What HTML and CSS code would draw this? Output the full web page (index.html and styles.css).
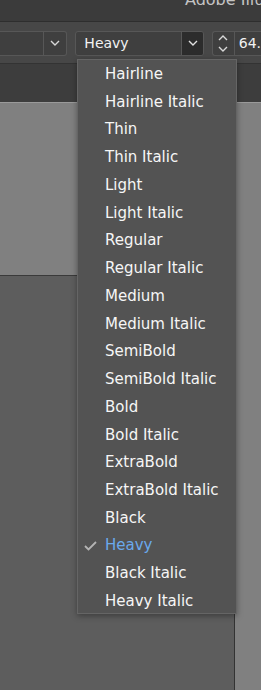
FILE: index.html
```html
<html>
<head>
    <link rel="stylesheet" href="styles.css">
</head>
<body>
    <div class="app">
        <div class="titlebar"><span class="title">Adobe Illustrator</span></div>
        <div class="controlbar">
            <div class="field field-left">
                <span class="field-text"></span>
                <span class="field-arrow">
                    <svg width="10" height="6" viewBox="0 0 10 6"><polyline points="1,1 5,5 9,1" fill="none" stroke="#d8d8d8" stroke-width="1.4"/></svg>
                </span>
            </div>
            <div class="field field-style">
                <span class="field-text">Heavy</span>
                <span class="field-arrow active">
                    <svg width="10" height="6" viewBox="0 0 10 6"><polyline points="1,1 5,5 9,1" fill="none" stroke="#e0e0e0" stroke-width="1.4"/></svg>
                </span>
            </div>
            <div class="stepper">
                <svg width="10" height="6" viewBox="0 0 10 6"><polyline points="1,5 5,1 9,5" fill="none" stroke="#d8d8d8" stroke-width="1.4"/></svg>
                <svg width="10" height="6" viewBox="0 0 10 6"><polyline points="1,1 5,5 9,1" fill="none" stroke="#d8d8d8" stroke-width="1.4"/></svg>
            </div>
            <div class="field field-size"><span class="field-text">64.</span></div>
        </div>
        <div class="tabbar"></div>
        <div class="workspace">
            <div class="document"></div>
        </div>

        <ul class="style-menu">
            <li>Hairline</li>
            <li>Hairline Italic</li>
            <li>Thin</li>
            <li>Thin Italic</li>
            <li>Light</li>
            <li>Light Italic</li>
            <li>Regular</li>
            <li>Regular Italic</li>
            <li>Medium</li>
            <li>Medium Italic</li>
            <li>SemiBold</li>
            <li>SemiBold Italic</li>
            <li>Bold</li>
            <li>Bold Italic</li>
            <li>ExtraBold</li>
            <li>ExtraBold Italic</li>
            <li>Black</li>
            <li class="selected">
                <svg class="check" width="13" height="10" viewBox="0 0 13 10"><polyline points="1,5 4.5,8.5 12,1" fill="none" stroke="#b4b4b4" stroke-width="1.8"/></svg>
                Heavy
            </li>
            <li>Black Italic</li>
            <li>Heavy Italic</li>
        </ul>
    </div>
</body>
</html>
```

FILE: styles.css
```css
body {
    margin: 0;
    padding: 0;
    font-family: "DejaVu Sans", "Open Sans", sans-serif;
    background-color: #808080;
}
.app {
    position: relative;
    width: 261px;
    height: 690px;
    overflow: hidden;
    display: flex;
    flex-direction: column;
}
.titlebar {
    height: 21px;
    background-color: #3b3b3b;
    border-bottom: 1px solid #2e2e2e;
    overflow: hidden;
}
.title {
    display: block;
    margin-top: -10px;
    padding-left: 185px;
    font-size: 16px;
    line-height: 20px;
    color: #c4c4c4;
    white-space: nowrap;
}
.controlbar {
    height: 42px;
    background-color: #474747;
    display: flex;
    align-items: center;
    gap: 8px;
    padding-top: 1px;
    box-sizing: border-box;
    border-bottom: 1px solid #333;
}
.field {
    height: 25px;
    box-sizing: border-box;
    background-color: #3f3f3f;
    border: 1px solid #575757;
    border-radius: 3px;
    display: flex;
    align-items: center;
}
.field-text {
    flex: 1;
    color: #f2f2f2;
    font-size: 14px;
    padding-left: 8px;
}
.field-arrow {
    width: 21px;
    height: 100%;
    display: flex;
    align-items: center;
    justify-content: center;
    border-left: 1px solid #575757;
}
.field-arrow.active {
    background-color: #2c2c2c;
    border-radius: 0 2px 2px 0;
}
.field-left {
    width: 69px;
    border-left: none;
    border-radius: 0 3px 3px 0;
}
.field-left .field-arrow {
    width: 22px;
}
.field-style {
    width: 132px;
}
.stepper {
    width: 22px;
    height: 25px;
    box-sizing: border-box;
    border: 1px solid #575757;
    border-right: none;
    border-radius: 3px 0 0 3px;
    background-color: #3f3f3f;
    display: flex;
    flex-direction: column;
    align-items: center;
    justify-content: center;
    gap: 5px;
}
.field-size {
    flex: 1;
    margin-left: -8px;
    border-right: none;
    border-radius: 0;
}
.field-size .field-text {
    padding-left: 4px;
}
.tabbar {
    height: 38px;
    background-color: #3d3d3d;
    border-bottom: 1px solid #9a9a9a;
}
.workspace {
    flex: 1;
    background-color: #808080;
    display: flex;
    flex-direction: column;
}
.document {
    margin-top: 172px;
    width: 234px;
    flex: 1;
    background-color: #5d5d5d;
    border-top: 1px solid #3a3a3a;
    border-right: 1px solid #333;
}
.style-menu {
    position: absolute;
    left: 77px;
    top: 59px;
    width: 160px;
    height: 555px;
    box-sizing: border-box;
    margin: 0;
    padding: 1px 0 0 0;
    overflow: hidden;
    list-style: none;
    background-color: #535353;
    border: 1px solid #656565;
    box-shadow: 0 2px 6px rgba(0, 0, 0, 0.35);
}
.style-menu li {
    position: relative;
    height: 27.74px;
    line-height: 27.74px;
    padding-left: 27px;
    color: #f6f6f6;
    font-size: 15px;
    white-space: nowrap;
}
.style-menu li.selected {
    color: #6aa9ec;
}
.check {
    position: absolute;
    left: 6px;
    top: 9px;
}
```
